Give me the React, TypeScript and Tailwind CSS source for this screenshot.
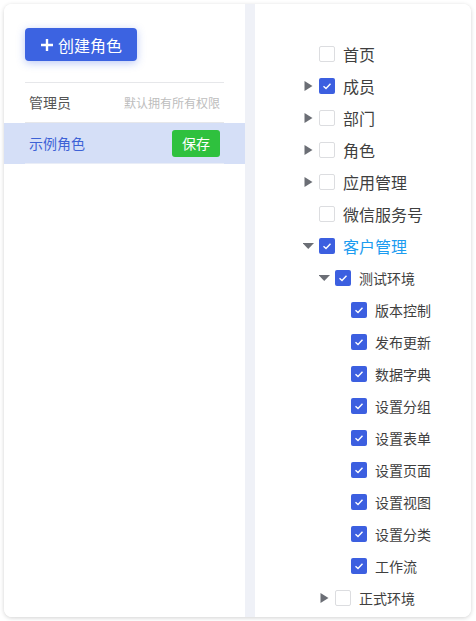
type Node = {
  label: string;
  level: number;
  checked?: boolean;
  arrow?: "right" | "down";
  active?: boolean;
};

const tree: Node[] = [
  { label: "首页", level: 0 },
  { label: "成员", level: 0, checked: true, arrow: "right" },
  { label: "部门", level: 0, arrow: "right" },
  { label: "角色", level: 0, arrow: "right" },
  { label: "应用管理", level: 0, arrow: "right" },
  { label: "微信服务号", level: 0 },
  { label: "客户管理", level: 0, checked: true, arrow: "down", active: true },
  { label: "测试环境", level: 1, checked: true, arrow: "down" },
  { label: "版本控制", level: 2, checked: true },
  { label: "发布更新", level: 2, checked: true },
  { label: "数据字典", level: 2, checked: true },
  { label: "设置分组", level: 2, checked: true },
  { label: "设置表单", level: 2, checked: true },
  { label: "设置页面", level: 2, checked: true },
  { label: "设置视图", level: 2, checked: true },
  { label: "设置分类", level: 2, checked: true },
  { label: "工作流", level: 2, checked: true },
  { label: "正式环境", level: 1, arrow: "right" },
];

const Arrow = ({ dir }: { dir?: "right" | "down" }) => (
  <span className="w-4 h-4 shrink-0">
    {dir && (
      <svg width="16" height="16" viewBox="0 0 16 16">
        {dir === "right" ? (
          <path d="M1.5 3 L9.5 8 L1.5 13 Z" fill="#6b6e75" />
        ) : (
          <path d="M-0.5 5 H11 L5.25 11 Z" fill="#6b6e75" />
        )}
      </svg>
    )}
  </span>
);

const Checkbox = ({ checked }: { checked?: boolean }) =>
  checked ? (
    <span className="w-4 h-4 shrink-0 rounded-[2px] bg-[#3c5fe0] flex items-center justify-center">
      <svg width="16" height="16" viewBox="0 0 16 16">
        <path d="M4.5 8.3 L7 10.5 L11.5 5.8" fill="none" stroke="white" strokeWidth="1.4" />
      </svg>
    </span>
  ) : (
    <span className="w-4 h-4 shrink-0 rounded-[2px] border border-[#dcdde0] bg-white" />
  );

const indent = ["pl-[48px]", "pl-[64px]", "pl-[80px]"];

export default function App() {
  return (
    <div className="w-[476px] h-[621px] bg-white pt-[4px] pl-[4px] font-['Noto_Sans_CJK_SC',sans-serif]">
      <div className="w-[467px] h-[613px] flex rounded-[8px] overflow-hidden bg-white shadow-[0_1px_4px_rgba(0,0,0,0.18)]">
        {/* roles */}
        <div className="w-[241px] pt-[24px] bg-white">
          <div className="px-[21px]">
            <button className="w-[112px] h-[33px] flex items-center justify-center gap-1 rounded-[4px] bg-[#3c63e1] text-white text-[16px] shadow-[0_2px_8px_rgba(60,99,225,0.35)]">
              <svg width="14" height="14" viewBox="0 0 14 14">
                <path d="M7 1 V13 M1 7 H13" stroke="white" strokeWidth="2.4" />
              </svg>
              创建角色
            </button>
          </div>
          <div className="mt-[21px] px-[21px]">
            <div className="h-[41px] flex items-center justify-between px-1 border-t border-b border-[#e6e7ea]">
              <span className="text-[14px] text-[#555]">管理员</span>
              <span className="text-[12px] text-[#bdbdbd]">默认拥有所有权限</span>
            </div>
          </div>
          <div className="bg-[#d5dff7] px-[21px]">
            <div className="h-[41px] flex items-center justify-between px-1 border-b border-[#e9edf7]">
              <span className="text-[14px] text-[#3d62d6]">示例角色</span>
              <button className="w-[48px] h-[27px] rounded-[3px] bg-[#2fc13e] text-white text-[14px]">
                保存
              </button>
            </div>
          </div>
        </div>
        <div className="w-[10px] bg-[#eff1f7]" />
        {/* permissions */}
        <div className="flex-1 pt-[34px] bg-white">
          {tree.map((n) => (
            <div key={n.label + n.level} className={`h-8 flex items-center ${indent[n.level]}`}>
              <Arrow dir={n.arrow} />
              <Checkbox checked={n.checked} />
              <span
                className={`ml-2 ${n.level === 0 ? "text-[16px]" : "text-[14px]"} ${
                  n.active ? "text-[#1c9cf0]" : "text-[#3f3f3f]"
                }`}
              >
                {n.label}
              </span>
            </div>
          ))}
        </div>
      </div>
    </div>
  );
}
